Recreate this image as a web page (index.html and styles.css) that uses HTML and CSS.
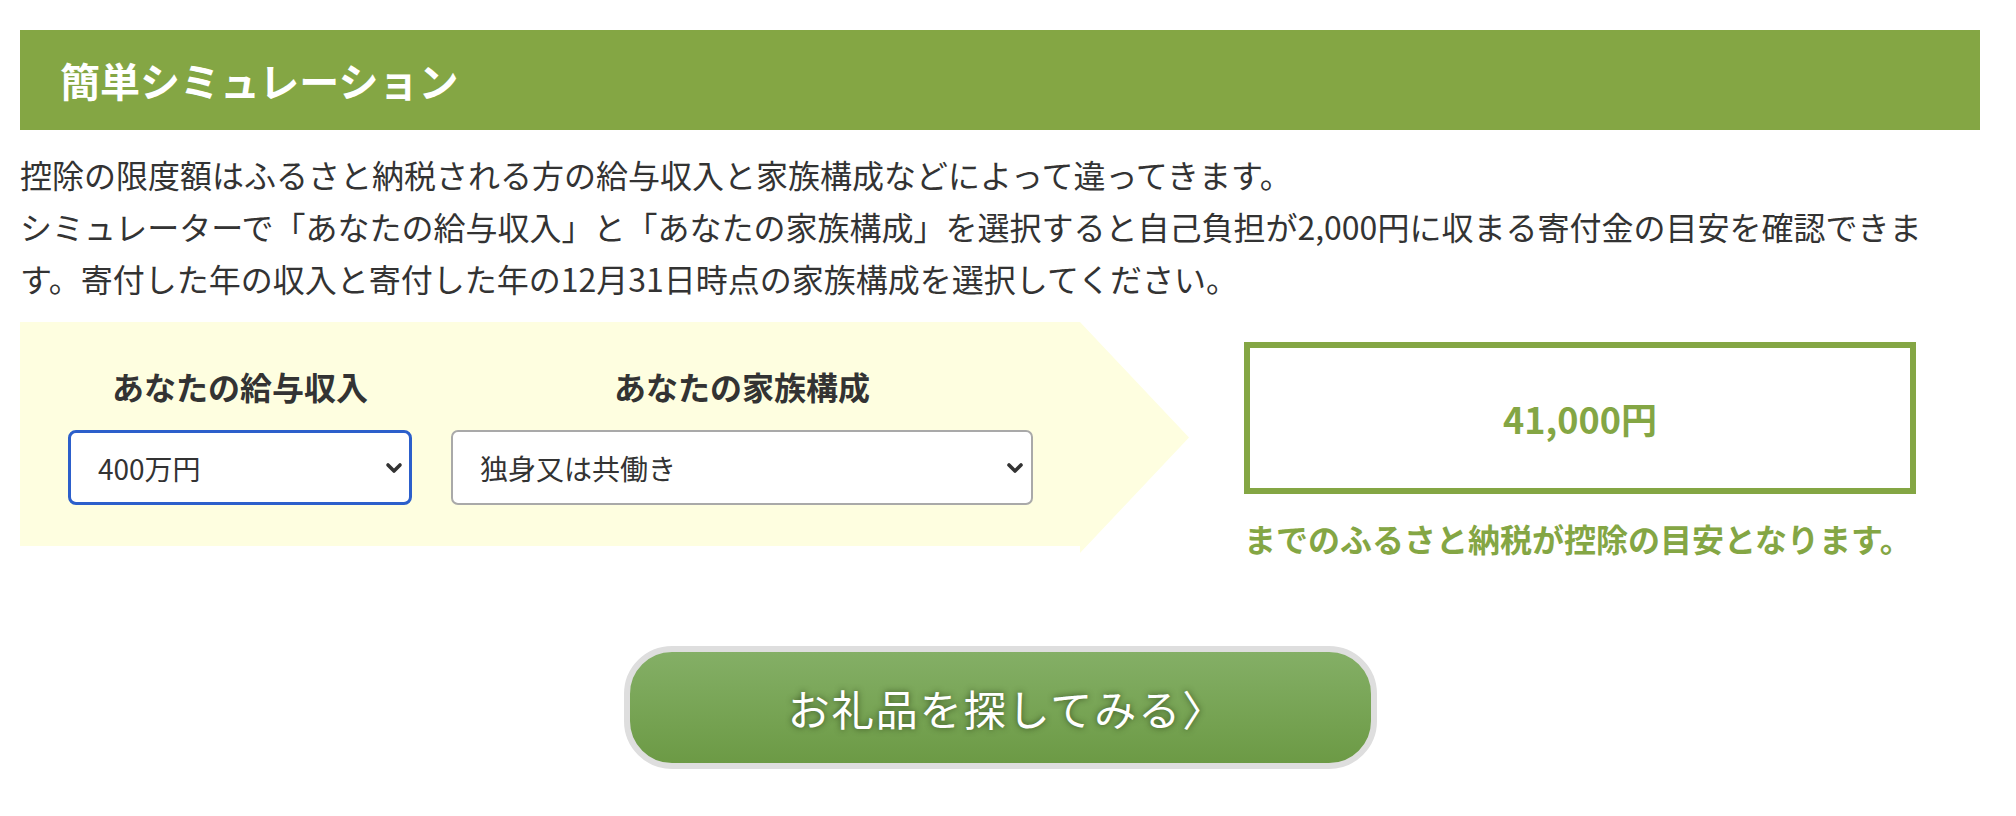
FILE: index.html
```html
<!DOCTYPE html>
<html lang="ja">
<head>
  <meta charset="UTF-8">
  <meta name="viewport" content="width=device-width, initial-scale=1.0">
  <title>簡単シミュレーション</title>
  <link rel="stylesheet" href="styles.css">
</head>
<body>
<div class="wrap">
  <h2 class="sim-title">簡単シミュレーション</h2>

  <p class="lead">
    控除の限度額はふるさと納税される方の給与収入と家族構成などによって違ってきます。<br>
    シミュレーターで「あなたの給与収入」と「あなたの家族構成」を選択すると自己負担が2,000円に収まる寄付金の目安を確認できま<br>す。寄付した年の収入と寄付した年の12月31日時点の家族構成を選択してください。
  </p>

  <div class="sim-row">
    <div class="sim-panel">
      <div class="sim-field field-income">
        <label class="sim-label" for="income">あなたの給与収入</label>
        <div class="select-wrap">
          <select id="income" class="sim-select is-focus">
            <option>300万円</option>
            <option selected>400万円</option>
            <option>500万円</option>
            <option>600万円</option>
          </select>
          <svg class="chev" width="18" height="12" viewBox="0 0 18 12"><path d="M3 3 L9 9 L15 3" fill="none" stroke="#333" stroke-width="3.6" stroke-linecap="round" stroke-linejoin="round"/></svg>
        </div>
      </div>
      <div class="sim-field field-family">
        <label class="sim-label" for="family">あなたの家族構成</label>
        <div class="select-wrap">
          <select id="family" class="sim-select">
            <option selected>独身又は共働き</option>
            <option>夫婦</option>
            <option>夫婦＋子1人</option>
          </select>
          <svg class="chev" width="18" height="12" viewBox="0 0 18 12"><path d="M3 3 L9 9 L15 3" fill="none" stroke="#333" stroke-width="3.6" stroke-linecap="round" stroke-linejoin="round"/></svg>
        </div>
      </div>
    </div>

    <div class="sim-result">
      <div class="result-box" id="result">41,000円</div>
      <p class="result-note">までのふるさと納税が控除の目安となります。</p>
    </div>
  </div>

  <div class="btn-row">
    <a class="btn-gift" href="#">お礼品を探してみる〉</a>
  </div>
</div>
</body>
</html>
```

FILE: styles.css
```css
body {
  margin: 0;
  background: #fff;
  color: #333;
  font-family: "Noto Sans CJK JP", "Noto Sans", sans-serif;
}
.wrap {
  width: 1960px;
  padding: 30px 0 0 20px;
}
.sim-title {
  margin: 0;
  height: 100px;
  padding-left: 40px;
  background: #84a644;
  color: #fff;
  font-size: 40px;
  font-weight: 700;
  line-height: 100px;
}
.lead {
  margin: 18px 0 0;
  font-size: 32px;
  line-height: 52px;
}
.sim-row {
  display: flex;
  align-items: flex-start;
  margin-top: 18px;
}
.sim-panel {
  width: 1169px;
  height: 231px;
  box-sizing: border-box;
  padding: 44px 0 0 48px;
  display: flex;
  gap: 39px;
  background: #fefee0;
  /* arrow on the right */
  clip-path: polygon(0 0, 1060px 0, 100% 50%, 1060px 100%, 1060px 224px, 0 224px);
}
.sim-field {
  display: flex;
  flex-direction: column;
  align-items: center;
  gap: 24px;
}
.field-income { width: 344px; }
.field-family { width: 582px; }
.sim-label {
  font-size: 32px;
  font-weight: 700;
  line-height: 40px;
  color: #333;
}
.select-wrap {
  position: relative;
  width: 100%;
}
.sim-select {
  -webkit-appearance: none;
  appearance: none;
  display: block;
  width: 100%;
  height: 75px;
  box-sizing: border-box;
  padding: 0 40px 0 27px;
  border: 2px solid #a9a9a9;
  border-radius: 7px;
  background: #fff;
  color: #333;
  font-family: "Noto Sans CJK JP", sans-serif;
  font-size: 28px;
  outline: none;
}
.sim-select.is-focus {
  border: 3px solid #2c5fcb;
  border-radius: 8px;
}
.chev {
  position: absolute;
  right: 9px;
  top: 32px;
  pointer-events: none;
}
.sim-result {
  width: 672px;
  margin-left: 55px;
  padding-top: 20px;
}
.result-box {
  height: 152px;
  box-sizing: border-box;
  border: 6px solid #84a644;
  color: #84a644;
  font-size: 36px;
  font-weight: 700;
  line-height: 140px;
  text-align: center;
}
.result-note {
  margin: 18px 0 0;
  color: #84a644;
  font-size: 32px;
  font-weight: 700;
  line-height: 52px;
  white-space: nowrap;
}
.btn-row {
  display: flex;
  justify-content: center;
  margin-top: 82px;
}
.btn-gift {
  display: block;
  width: 753px;
  height: 123px;
  box-sizing: border-box;
  padding-left: 14px;
  border: 6px solid #dedede;
  border-radius: 48px;
  background: linear-gradient(#84af66, #6c9a45);
  color: #fff;
  font-size: 42px;
  letter-spacing: 2px;
  line-height: 111px;
  text-align: center;
  text-decoration: none;
  text-shadow: 0 0 6px rgba(40, 60, 20, 0.8);
}
```
